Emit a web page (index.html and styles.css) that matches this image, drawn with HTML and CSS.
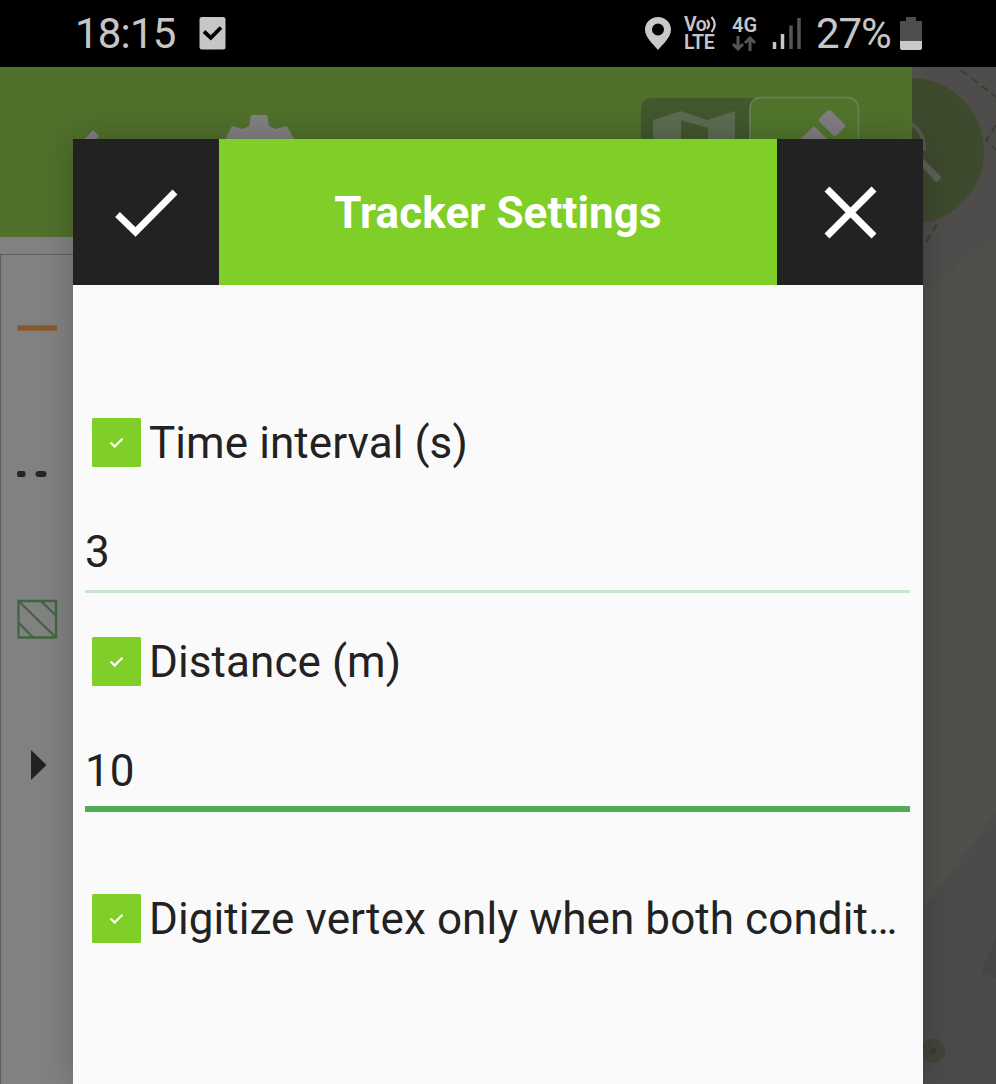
FILE: index.html
```html
<!DOCTYPE html>
<html lang="en">
<head>
<meta charset="utf-8">
<title>Tracker Settings</title>
<link rel="stylesheet" href="styles.css">
</head>
<body>
<div class="phone">
  <header class="status">
    <span class="clock">18:15</span>
    <svg class="task" width="28" height="34" viewBox="0 0 28 34"><rect x="0.500" y="0" width="26" height="32.500" rx="2.500" fill="#c6c6c6"/><path d="M5 14.500 11.800 20.800 22 10.500" fill="none" stroke="#000" stroke-width="3.800"/></svg>
    <svg class="pin" width="26" height="33" viewBox="0 0 26 33"><path fill="#c9c9c9" fill-rule="evenodd" d="M13 0C5.800 0 0 5.600 0 12.700 0 20 8 27 13 33 18 27 26 20 26 12.700 26 5.600 20.200 0 13 0Zm0 6.500a6 6 0 1 1 0 12 6 6 0 0 1 0-12Z"/></svg>
    <div class="volte"><span class="vo">Vo<svg width="12" height="17" viewBox="0 0 12 17"><path d="M1 4Q5 8.500 1 13M5.500 1Q12 8 5.500 16" fill="none" stroke="#c6c6c6" stroke-width="2.300"/></svg></span><span class="lte">LTE</span></div>
    <div class="net"><span>4G</span><svg width="24" height="15" viewBox="0 0 24 15"><path d="M6 0V13M1 8l5 5 5-5M18 15V2M13 7l5-5 5 5" fill="none" stroke="#555" stroke-width="3"/></svg></div>
    <svg class="signal" width="30" height="32" viewBox="0 0 30 32"><path d="M2.500 24V31M10.500 16V31" stroke="#c6c6c6" stroke-width="3.500"/><path d="M19 7.500V31M27 0V31" stroke="#555" stroke-width="3.500"/></svg>
    <span class="percent">27%</span>
    <svg class="battery" width="22" height="34" viewBox="0 0 22 34"><path fill="#4e4e4e" d="M6 0h10v4h6v20H0V4h6Z"/><path fill="#c9c9c9" d="M0 24h22v7q0 2-2 2H2q-2 0-2-2Z"/></svg>
  </header>

  <main class="app">
    <svg class="map" width="996" height="1017" viewBox="0 67 996 1017">
      <rect y="67" width="996" height="1017" fill="#4f504a"/>
      <path d="M996 67V240L923 290V67Z" fill="#4f4d4b"/>
      <path d="M996 812 923 910V1084H996Z" fill="#4b4b4b"/>
      <path d="M996 938 981 972 996 978Z" fill="#484644"/>
      <path d="M961 70 996 97M996 125 986 140 996 150M937 224 923 247" fill="none" stroke="#3d3c38" stroke-width="2" stroke-dasharray="8 5"/>
      <circle cx="911" cy="151" r="73" fill="#3e4a2e"/>
      <path d="M911 124Q925 132 924 151" fill="none" stroke="#525a4e" stroke-width="4"/>
      <path d="M917 157 939 180" stroke="#5a6156" stroke-width="7"/>
      <circle cx="933" cy="1051" r="12" fill="#414539"/><circle cx="933" cy="1051" r="3" fill="#383c31"/>
    </svg>
    <div class="side">
      <nav class="toolbar">
        <svg width="912" height="170" viewBox="0 67 912 170">
          <path d="M72 152 93 130 99 136 84 152Z" fill="#808080"/>
          <path d="M220 150 232 126 243 129 249 126 251 115H267L269 126 276 129 287 126 300 150Z" fill="#808080"/>
          <path d="M641 160V110Q641 98 653 98H757L750 110V160Z" fill="#41572d"/>
          <path d="M653 150V120L681 111 707 120 735 111V150Z" fill="#5b6b50"/>
          <path d="M681 150V120L708 128V150Z" fill="#41572d"/>
          <path d="M750 160V110Q750 97.500 762 97.500H846Q858.500 97.500 858.500 110V160" fill="#50742c" stroke="#6d825a" stroke-width="1.500"/>
          <rect x="-12" y="-8" width="24" height="16" rx="3" transform="translate(832 123) rotate(45)" fill="#817d81"/>
          <path d="M798 141 814 126 829 141 822 150H792Z" fill="#817d81"/>
        </svg>
      </nav>
      <section class="legend">
        <svg width="73" height="830" viewBox="0 254 73 830">
          <path d="M73 254.500H0.500V1084" fill="none" stroke="#606060" stroke-width="1.200"/>
          <path d="M17.500 328H57" stroke="#875730" stroke-width="5.500"/>
          <rect x="17" y="471" width="8.500" height="6" rx="2" fill="#252525"/><rect x="35.500" y="471" width="11" height="6" rx="3" fill="#252525"/>
          <path d="M18.500 601H56V637.500H18.500ZM18.500 601 56 637.500M41 601 56 615.500M18.500 622.500 33 637.500" fill="none" stroke="#40663f" stroke-width="2.300"/>
          <path d="M31 750 46.500 765 31 780Z" fill="#222"/>
        </svg>
      </section>
    </div>
  </main>

  <div class="dialog">
    <div class="titlebar">
      <button class="action" aria-label="Accept"><svg width="146" height="146" viewBox="0 0 146 146"><path d="M44.500 75.500 62.500 93 102 53" fill="none" stroke="#fff" stroke-width="6.800"/></svg></button>
      <h1 class="title"><span>Tracker Settings</span></h1>
      <button class="action" aria-label="Close"><svg width="146" height="146" viewBox="0 0 146 146"><path d="M50 50 97 97M97 50 50 97" fill="none" stroke="#fff" stroke-width="7"/></svg></button>
    </div>
    <div class="form">
      <div class="check"><span class="box"><svg width="49" height="49" viewBox="0 0 49 49"><path d="M18.500 24.500 22.700 28.500 30.500 20.800" fill="none" stroke="#fff" stroke-width="2.300"/></svg></span><span class="label time">Time interval (s)</span></div>
      <div class="field"><span>3</span></div>
      <div class="check second"><span class="box"><svg width="49" height="49" viewBox="0 0 49 49"><path d="M18.500 24.500 22.700 28.500 30.500 20.800" fill="none" stroke="#fff" stroke-width="2.300"/></svg></span><span class="label dist">Distance (m)</span></div>
      <div class="field focused"><span>10</span></div>
      <div class="check third"><span class="box"><svg width="49" height="49" viewBox="0 0 49 49"><path d="M18.500 24.500 22.700 28.500 30.500 20.800" fill="none" stroke="#fff" stroke-width="2.300"/></svg></span><span class="label both">Digitize vertex only when both condit…</span></div>
    </div>
  </div>
</div>
</body>
</html>
```
FILE: styles.css
```css
* { box-sizing: border-box; }
body { margin: 0; font-family: Roboto, sans-serif; background: #000; }
svg { display: block; flex: none; }
.phone { position: relative; width: 996px; height: 1084px; overflow: hidden; }

.status { display: flex; align-items: center; height: 67px; padding-left: 75px; background: #000; color: #c6c6c6; white-space: nowrap; }
.clock { width: 101px; font-size: 42px; letter-spacing: -.8px; }
.task { margin-left: 23px; }
.pin { margin-left: 418px; }
.volte { display: flex; flex-direction: column; width: 36px; margin-left: 13px; font-size: 19.500px; font-weight: 600; line-height: 18px; }
.vo { display: flex; align-items: center; height: 18px; letter-spacing: -.4px; }
.lte { letter-spacing: -.3px; }
.net { width: 26px; margin-left: 12px; font-size: 20px; font-weight: 600; line-height: 19px; }
.net svg { margin-top: 1px; }
.signal { margin-left: 14px; }
.percent { width: 76px; margin-left: 14px; font-size: 42px; letter-spacing: -1.100px; }
.battery { margin-left: 8px; }

.app { display: grid; height: 1017px; }
.map, .side { grid-area: 1 / 1; }
.toolbar { width: 912px; height: 170px; background: #50702c; }
.legend { width: 73px; height: 847px; padding-top: 17px; background: #818181; }

.dialog { position: absolute; left: 73px; top: 139px; width: 850px; height: 945px; background: #fafafa; box-shadow: 0 0 30px rgba(0, 0, 0, .22); }
.titlebar { display: flex; height: 146px; }
.action { width: 146px; height: 146px; padding: 0; border: 0; background: #222; }
.title { display: flex; flex: 1; align-items: center; justify-content: center; margin: 0; padding-top: 2px; background: #80ce28; color: #fff; font-size: 44px; font-weight: 700; letter-spacing: .08px; }
.form { padding: 133px 13px 0 12px; color: #222; font-size: 44px; }
.check { display: flex; align-items: center; height: 49px; padding-left: 7px; letter-spacing: .08px; white-space: nowrap; }
.box { width: 49px; height: 49px; margin-right: 8px; border-radius: 1.500px; background: #80ce28; }
.field { height: 126px; padding-top: 59px; border-bottom: 3px solid #cae5cb; line-height: 52px; }
.second { margin-top: 44px; }
.field.focused { border-bottom: 6px solid #51ad55; }
.third { margin-top: 82px; }
```
